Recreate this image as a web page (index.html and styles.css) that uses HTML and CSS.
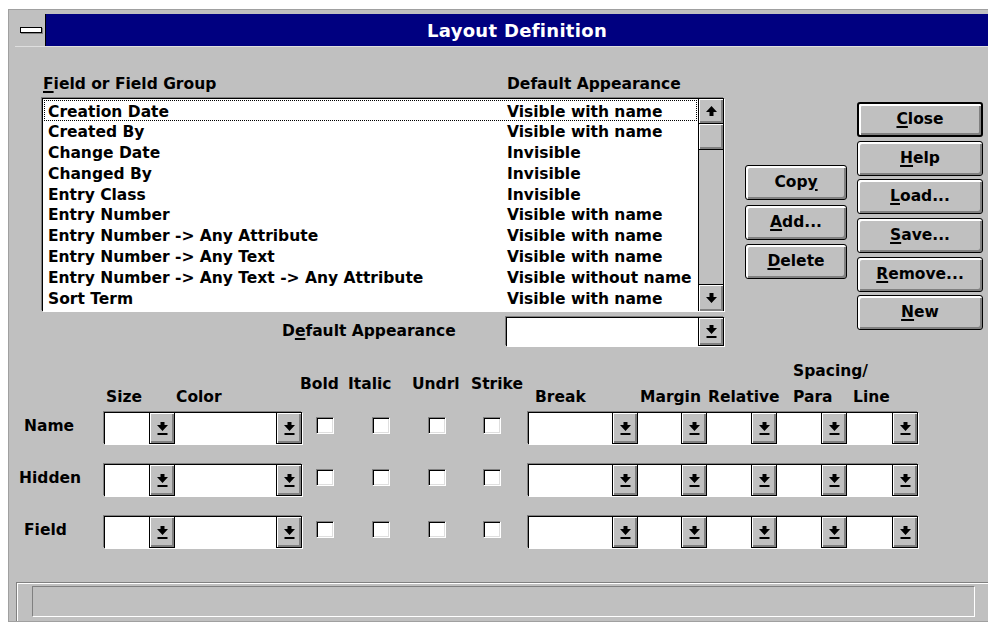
FILE: index.html
```html
<!DOCTYPE html>
<html lang="en">
<head>
<meta charset="utf-8">
<title>Layout Definition</title>
<link rel="stylesheet" href="styles.css">
</head>
<body>
<svg class="defs" width="0" height="0" aria-hidden="true">
  <symbol id="ico-drop" viewBox="0 0 11 13"><path d="M3.5 0H7.5V3H11L5.5 9L0 3H3.5Z"/><rect x="0.5" y="11" width="10" height="2"/></symbol>
  <symbol id="ico-up" viewBox="0 0 11 10"><path d="M0 6L5.5 0L11 6H7.5V10H3.5V6Z"/></symbol>
  <symbol id="ico-down" viewBox="0 0 11 10"><path d="M3.5 0H7.5V4H11L5.5 10L0 4H3.5Z"/></symbol>
</svg>

<div class="window">
  <div class="titlebar">
    <div class="sysmenu"><span class="sysmenu-bar"></span></div>
    <div class="title">Layout Definition</div>
  </div>

  <div class="client">
    <div class="top">
      <div class="fieldpane">
        <div class="listhead">
          <span class="col-name"><u>F</u>ield or Field Group</span>
          <span>Default Appearance</span>
        </div>

        <div class="listbox sunken">
          <div class="items">
            <div class="item focused"><span class="col-name">Creation Date</span><span>Visible with name</span></div>
            <div class="item"><span class="col-name">Created By</span><span>Visible with name</span></div>
            <div class="item"><span class="col-name">Change Date</span><span>Invisible</span></div>
            <div class="item"><span class="col-name">Changed By</span><span>Invisible</span></div>
            <div class="item"><span class="col-name">Entry Class</span><span>Invisible</span></div>
            <div class="item"><span class="col-name">Entry Number</span><span>Visible with name</span></div>
            <div class="item"><span class="col-name">Entry Number -&gt; Any Attribute</span><span>Visible with name</span></div>
            <div class="item"><span class="col-name">Entry Number -&gt; Any Text</span><span>Visible with name</span></div>
            <div class="item"><span class="col-name">Entry Number -&gt; Any Text -&gt; Any Attribute</span><span>Visible without name</span></div>
            <div class="item"><span class="col-name">Sort Term</span><span>Visible with name</span></div>
          </div>
          <div class="vscroll">
            <div class="sbtn sbtn-up"><svg class="ico-scroll"><use href="#ico-up"/></svg></div>
            <div class="thumb"></div>
            <div class="track"></div>
            <div class="sbtn sbtn-down"><svg class="ico-scroll"><use href="#ico-down"/></svg></div>
          </div>
        </div>

        <div class="defrow">
          <span class="deflabel">D<u>e</u>fault Appearance</span>
          <div class="cgroup sunken def-combo">
            <div class="combo combo-fill"><div class="field"></div><div class="drop"><svg class="ico-drop"><use href="#ico-drop"/></svg></div></div>
          </div>
        </div>
      </div>

      <div class="btncol btncol-mid">
        <button type="button" class="btn">Cop<u>y</u></button>
        <button type="button" class="btn"><u>A</u>dd...</button>
        <button type="button" class="btn"><u>D</u>elete</button>
      </div>

      <div class="btncol btncol-side">
        <button type="button" class="btn btn-default"><u>C</u>lose</button>
        <button type="button" class="btn"><u>H</u>elp</button>
        <button type="button" class="btn"><u>L</u>oad...</button>
        <button type="button" class="btn"><u>S</u>ave...</button>
        <button type="button" class="btn"><u>R</u>emove...</button>
        <button type="button" class="btn"><u>N</u>ew</button>
      </div>
    </div>

    <div class="format">
      <div class="fhead">
        <span class="h h-spacer"></span>
        <span class="h h-size">Size</span>
        <span class="h h-color">Color</span>
        <span class="h h-bold h-raised">Bold</span>
        <span class="h h-italic h-raised">Italic</span>
        <span class="h h-undrl h-raised">Undrl</span>
        <span class="h h-strike h-raised">Strike</span>
        <span class="h h-break">Break</span>
        <span class="h h-margin">Margin</span>
        <span class="h h-relative">Relative</span>
        <div class="h-spacing">
          <span class="spacing-title">Spacing/</span>
          <div class="spacing-cols"><span class="h h-para">Para</span><span class="h">Line</span></div>
        </div>
      </div>

      <div class="frows">
        <div class="frow">
          <span class="rowlabel">Name</span>
          <div class="cgroup sunken font-group">
            <div class="combo combo-size"><div class="field"></div><div class="drop"><svg class="ico-drop"><use href="#ico-drop"/></svg></div></div>
            <div class="combo combo-color"><div class="field"></div><div class="drop"><svg class="ico-drop"><use href="#ico-drop"/></svg></div></div>
          </div>
          <span class="cb cb-bold"></span>
          <span class="cb cb-next"></span>
          <span class="cb cb-next"></span>
          <span class="cb cb-last"></span>
          <div class="cgroup sunken para-group">
            <div class="combo combo-break"><div class="field"></div><div class="drop"><svg class="ico-drop"><use href="#ico-drop"/></svg></div></div>
            <div class="combo combo-margin"><div class="field"></div><div class="drop"><svg class="ico-drop"><use href="#ico-drop"/></svg></div></div>
            <div class="combo combo-relative"><div class="field"></div><div class="drop"><svg class="ico-drop"><use href="#ico-drop"/></svg></div></div>
            <div class="combo combo-para"><div class="field"></div><div class="drop"><svg class="ico-drop"><use href="#ico-drop"/></svg></div></div>
            <div class="combo combo-line"><div class="field"></div><div class="drop"><svg class="ico-drop"><use href="#ico-drop"/></svg></div></div>
          </div>
        </div>

        <div class="frow">
          <span class="rowlabel rowlabel-wide">Hidden</span>
          <div class="cgroup sunken font-group">
            <div class="combo combo-size"><div class="field"></div><div class="drop"><svg class="ico-drop"><use href="#ico-drop"/></svg></div></div>
            <div class="combo combo-color"><div class="field"></div><div class="drop"><svg class="ico-drop"><use href="#ico-drop"/></svg></div></div>
          </div>
          <span class="cb cb-bold"></span>
          <span class="cb cb-next"></span>
          <span class="cb cb-next"></span>
          <span class="cb cb-last"></span>
          <div class="cgroup sunken para-group">
            <div class="combo combo-break"><div class="field"></div><div class="drop"><svg class="ico-drop"><use href="#ico-drop"/></svg></div></div>
            <div class="combo combo-margin"><div class="field"></div><div class="drop"><svg class="ico-drop"><use href="#ico-drop"/></svg></div></div>
            <div class="combo combo-relative"><div class="field"></div><div class="drop"><svg class="ico-drop"><use href="#ico-drop"/></svg></div></div>
            <div class="combo combo-para"><div class="field"></div><div class="drop"><svg class="ico-drop"><use href="#ico-drop"/></svg></div></div>
            <div class="combo combo-line"><div class="field"></div><div class="drop"><svg class="ico-drop"><use href="#ico-drop"/></svg></div></div>
          </div>
        </div>

        <div class="frow">
          <span class="rowlabel">Field</span>
          <div class="cgroup sunken font-group">
            <div class="combo combo-size"><div class="field"></div><div class="drop"><svg class="ico-drop"><use href="#ico-drop"/></svg></div></div>
            <div class="combo combo-color"><div class="field"></div><div class="drop"><svg class="ico-drop"><use href="#ico-drop"/></svg></div></div>
          </div>
          <span class="cb cb-bold"></span>
          <span class="cb cb-next"></span>
          <span class="cb cb-next"></span>
          <span class="cb cb-last"></span>
          <div class="cgroup sunken para-group">
            <div class="combo combo-break"><div class="field"></div><div class="drop"><svg class="ico-drop"><use href="#ico-drop"/></svg></div></div>
            <div class="combo combo-margin"><div class="field"></div><div class="drop"><svg class="ico-drop"><use href="#ico-drop"/></svg></div></div>
            <div class="combo combo-relative"><div class="field"></div><div class="drop"><svg class="ico-drop"><use href="#ico-drop"/></svg></div></div>
            <div class="combo combo-para"><div class="field"></div><div class="drop"><svg class="ico-drop"><use href="#ico-drop"/></svg></div></div>
            <div class="combo combo-line"><div class="field"></div><div class="drop"><svg class="ico-drop"><use href="#ico-drop"/></svg></div></div>
          </div>
        </div>
      </div>
    </div>

    <div class="statusbar"><div class="statuspanel"></div></div>
  </div>
</div>
</body>
</html>
```

FILE: styles.css
```css
* { box-sizing: border-box; }

html, body { margin: 0; padding: 0; }

body {
  background: #fff;
  font-family: "DejaVu Sans", "Liberation Sans", sans-serif;
  font-weight: bold;
  font-size: 15.5px;
  line-height: 21px;
  color: #000;
  overflow: hidden;
}

.defs { position: absolute; width: 0; height: 0; overflow: hidden; }

u {
  text-decoration-thickness: 2px;
  text-underline-offset: 2px;
}

/* ---- window frame ---- */
.window {
  margin: 9px 0 0 8px;
  width: 980px;
  height: 613px;
  background: #c0c0c0;
  border-top: 1px solid #a0a0a0;
  border-left: 1px solid #a0a0a0;
  border-bottom: 1px solid #a0a0a0;
  display: flex;
  flex-direction: column;
}

.titlebar {
  flex: none;
  margin: 4px 0 0 6px;
  height: 33px;
  display: flex;
  background: #000080;
  border-bottom: 1px solid #dfdfdf;
}

.sysmenu {
  flex: none;
  width: 31px;
  background: #c0c0c0;
  border-right: 1px solid #000;
  display: flex;
  align-items: center;
  padding-left: 5px;
}

.sysmenu-bar {
  width: 22px;
  height: 6px;
  background: #fff;
  border: 1px solid #000;
  box-shadow: 1px 1px 0 #808080;
}

.title {
  flex: 1;
  text-align: center;
  color: #fff;
  font-size: 18px;
  line-height: 30px;
  padding-top: 2px;
  letter-spacing: 0.3px;
}

.client {
  flex: 1;
  display: flex;
  flex-direction: column;
}

/* ---- sunken 3D edge shared by list and combo groups ---- */
.sunken {
  border-top: 1px solid #000;
  border-left: 1px solid #000;
  box-shadow: -1px -1px 0 #808080, 1px 1px 0 #fff;
}

/* ---- upper area: field list and buttons ---- */
.top {
  display: flex;
  align-items: flex-start;
}

.fieldpane {
  flex: none;
  margin: 27px 0 0 32px;
  width: 684px;
}

.listhead {
  display: flex;
  height: 21px;
  padding-left: 2px;
  white-space: nowrap;
}

.listhead .col-name { width: 464px; }

.listbox {
  margin: 3px 0 0 1px;
  width: 682px;
  height: 213px;
  display: flex;
}

.items {
  flex: none;
  width: 655px;
  background: #fff;
  padding-top: 1px;
}

.item {
  display: flex;
  height: 20.8px;
  margin: 0 1px;
  padding: 1.5px 0 0 4px;
  line-height: 20.8px;
  white-space: nowrap;
}

.item .col-name { width: 459px; flex: none; }

.item.focused {
  outline: 1px dotted #000;
  outline-offset: -1px;
}

.vscroll {
  flex: none;
  width: 26px;
  display: flex;
  flex-direction: column;
  background: #c0c0c0;
  border-left: 1px solid #000;
  border-right: 1px solid #000;
}

.sbtn, .thumb {
  display: flex;
  align-items: center;
  justify-content: center;
  background: #c0c0c0;
  box-shadow: inset 1px 1px 0 #fff, inset -2px -2px 0 #808080;
}

.sbtn-up { height: 25px; border-bottom: 1px solid #000; }
.thumb { height: 26px; border-bottom: 1px solid #000; }
.track { flex: 1; }
.sbtn-down { height: 27px; border-top: 1px solid #000; }

.ico-scroll { width: 11px; height: 10px; fill: #000; }

.defrow {
  display: flex;
  align-items: center;
  margin-top: 6px;
  height: 29px;
  white-space: nowrap;
}

.deflabel { margin-left: 241px; }

/* ---- combo boxes ---- */
.cgroup {
  display: flex;
  background: #fff;
}

.combo {
  flex: none;
  display: flex;
  height: 100%;
}

.field {
  flex: 1;
  background: #fff;
}

.drop {
  flex: none;
  width: 26px;
  display: flex;
  align-items: center;
  justify-content: center;
  background: #c0c0c0;
  border-left: 1px solid #000;
  border-right: 1px solid #000;
  border-bottom: 1px solid #000;
  box-shadow: inset 1px 1px 0 #fff, inset -2px -2px 0 #808080;
}

.ico-drop { width: 11px; height: 13px; fill: #000; }

.def-combo {
  margin-left: auto;
  margin-right: 1px;
  width: 218px;
  height: 29px;
}

.combo-fill { flex: 1; }

/* ---- push buttons ---- */
.btncol {
  flex: none;
  display: flex;
  flex-direction: column;
}

.btncol-mid {
  margin: 118px 0 0 20px;
  width: 102px;
  gap: 4.5px;
}

.btncol-side {
  margin: 55px 0 0 10px;
  width: 126px;
  gap: 3.66px;
}

.btn {
  height: 35px;
  padding: 0;
  font: inherit;
  color: #000;
  background: #c0c0c0;
  border: 1px solid #000;
  border-radius: 3px;
  box-shadow: inset 2px 2px 0 #fff, inset -2px -2px 0 #808080;
  display: flex;
  align-items: center;
  justify-content: center;
  white-space: nowrap;
}

.btn-default { border-width: 2px; }

/* ---- character / paragraph format table ---- */
.format { margin-top: 15px; }

.fhead {
  display: flex;
  align-items: flex-end;
  height: 47px;
  white-space: nowrap;
}

.h { flex: none; }
.h-raised { margin-bottom: 13px; }

.h-spacer { width: 97px; }
.h-size { width: 70px; }
.h-color { width: 124px; }
.h-bold { width: 48px; }
.h-italic { width: 64px; }
.h-undrl { width: 59px; }
.h-strike { width: 64px; }
.h-break { width: 105px; }
.h-margin { width: 68px; }
.h-relative { width: 85px; }
.h-para { width: 60px; }

.h-spacing {
  display: flex;
  flex-direction: column;
}

.spacing-title { margin-bottom: 5px; }
.spacing-cols { display: flex; }

.frows {
  margin-top: 3px;
  display: flex;
  flex-direction: column;
  gap: 18px;
}

.frow {
  display: flex;
  align-items: flex-start;
  height: 34px;
}

.rowlabel {
  flex: none;
  width: 95px;
  padding-left: 15px;
  margin-top: 5px;
}

.rowlabel-wide { padding-left: 10px; }

.frow .cgroup {
  margin-top: 1px;
  height: 32px;
}

.font-group { width: 198px; }
.para-group { width: 390px; margin-left: 27px; }

.combo-size { width: 70px; }
.combo-color { width: 127px; }
.combo-break { width: 109px; }
.combo-margin { width: 69px; }
.combo-relative { width: 70px; }
.combo-para { width: 70px; }
.combo-line { width: 71px; }

.cb {
  flex: none;
  width: 18px;
  height: 17px;
  margin-top: 6px;
  background: #fff;
  border-top: 1px solid #808080;
  border-left: 1px solid #808080;
  border-right: 1px solid #fff;
  border-bottom: 1px solid #fff;
  box-shadow: inset 1px 1px 0 #000, inset -1px -1px 0 #dfdfdf;
}

.cb-bold { margin-left: 14px; }
.cb-next { margin-left: 38px; }
.cb-last { margin-left: 37px; }

/* ---- status bar ---- */
.statusbar {
  margin: auto 0 0 7px;
  height: 39px;
  border-top: 1px solid #808080;
  border-left: 1px solid #808080;
  box-shadow: inset 1px 1px 0 #fff;
  padding: 3px 0 0 15px;
}

.statuspanel {
  width: 943px;
  height: 31px;
  border-top: 1px solid #808080;
  border-left: 1px solid #808080;
  border-bottom: 1px solid #fff;
  border-right: 1px solid #fff;
}
```
